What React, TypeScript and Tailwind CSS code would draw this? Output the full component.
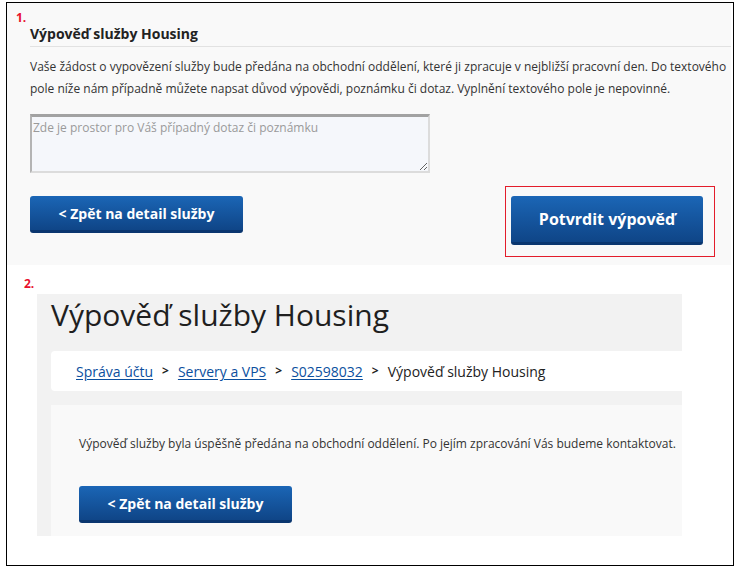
export default function App() {
  const btn =
    "rounded-[3px] border-b-[3px] border-[#0a366f] bg-gradient-to-b from-[#1b66b6] to-[#0f4587] font-bold text-white";

  return (
    <div
      className="h-[572px] w-[740px] bg-white pl-[6px] pt-[2px]"
      style={{ fontFamily: '"Open Sans", "Liberation Sans", sans-serif' }}
    >
      <div className="h-[564px] w-[728px] border border-black">
        {/* 1. form */}
        <div className="h-[262px] w-[724px] bg-[#f9f9f9] pl-[9px] pt-[9px]">
          <div className="text-[12px] font-bold leading-[12px] text-[#e8112d]">1.</div>
          <div className="pl-[14px]">
            <h2 className="border-b border-[#e2e2e2] pb-[2px] text-[14px] font-bold leading-[20px] text-[#222]">
              Výpověď služby Housing
            </h2>
            <p className="mt-[9px] pr-[4px] text-[12px] leading-[21.5px] text-[#333]">
              Vaše žádost o vypovězení služby bude předána na obchodní oddělení, které ji zpracuje v
              nejbližší pracovní den. Do textového pole níže nám případně můžete napsat důvod
              výpovědi, poznámku či dotaz. Vyplnění textového pole je nepovinné.
            </p>
            <textarea
              className="mt-[15px] block h-[59px] w-[400px] resize border-2 border-t-[3px] border-b-[#dcdcdc] border-l-[#b4b4b4] border-r-[#dcdcdc] border-t-[#a2a2a2] bg-[#f5f7fb] px-[1px] py-[2px] text-[12px] leading-[18px] text-[#333] outline-none placeholder:text-[#9a9a9a]"
              placeholder="Zde je prostor pro Váš případný dotaz či poznámku"
            />
            <div className="mt-[13px] flex items-start justify-between pr-[16px]">
              <button className={`mt-[10px] h-[37px] w-[213px] text-[14px] ${btn}`}>
                &lt; Zpět na detail služby
              </button>
              <div className="h-[71px] w-[210px] border border-[#e31d2b] pl-[5px] pt-[9px]">
                <button className={`h-[49px] w-[192px] text-[16px] ${btn}`}>
                  Potvrdit výpověď
                </button>
              </div>
            </div>
          </div>
        </div>

        {/* 2. result */}
        <div className="pl-[17px] pt-[13px]">
          <div className="text-[12px] font-bold leading-[12px] text-[#e8112d]">2.</div>
        </div>
        <div className="ml-[30px] mt-[4px] w-[645px] bg-[#f2f2f2] pl-[14px]">
          <h1 className="h-[57px] pt-px text-[30px] font-normal leading-[40px] text-[#1f1f1f]">
            Výpověď služby Housing
          </h1>
          <nav className="flex h-[40px] items-center rounded-l-[4px] bg-white pl-[25px] text-[14px] text-[#222]">
            <a href="#" className="text-[#0b4f9e] underline underline-offset-2">
              Správa účtu
            </a>
            <span className="mx-[9px] text-[12px] font-bold">&gt;</span>
            <a href="#" className="text-[#0b4f9e] underline underline-offset-2">
              Servery a VPS
            </a>
            <span className="mx-[9px] text-[12px] font-bold">&gt;</span>
            <a href="#" className="text-[#0b4f9e] underline underline-offset-2">
              S02598032
            </a>
            <span className="mx-[9px] text-[12px] font-bold">&gt;</span>
            <span>Výpověď služby Housing</span>
          </nav>
          <div className="mt-[14px] h-[131px] bg-[#f9f9f9] pl-[28px] pt-[29px]">
            <p className="text-[12px] leading-[20px] text-[#333]">
              Výpověď služby byla úspěšně předána na obchodní oddělení. Po jejím zpracování Vás
              budeme kontaktovat.
            </p>
            <button className={`mt-[32px] h-[37px] w-[213px] text-[14px] ${btn}`}>
              &lt; Zpět na detail služby
            </button>
          </div>
        </div>
      </div>
    </div>
  );
}
